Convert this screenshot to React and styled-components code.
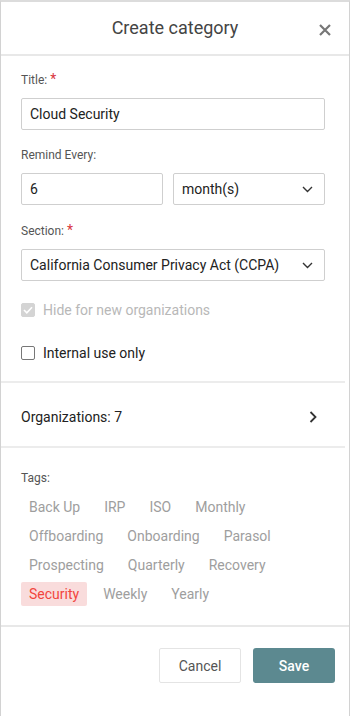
import styled, { createGlobalStyle } from 'styled-components';

const tags = [
  'Back Up', 'IRP', 'ISO', 'Monthly',
  'Offboarding', 'Onboarding', 'Parasol',
  'Prospecting', 'Quarterly', 'Recovery',
  'Security', 'Weekly', 'Yearly',
];

const GlobalStyle = createGlobalStyle`
  html, body {
    margin: 0;
    padding: 0;
    background: #fff;
    font-family: Roboto, "Liberation Sans", Arial, sans-serif;
  }
  * { box-sizing: border-box; }
`;

const Chevron = () => (
  <svg width='11' height='7' viewBox='0 0 11 7' fill='none'>
    <path d='M1 1l4.5 4.5L10 1' stroke='#333' strokeWidth='1.4' />
  </svg>
);

const App = () => {
  return (
    <>
      <GlobalStyle />
      <Modal>
        <Header>
          <h1>Create category</h1>
          <CloseButton aria-label='Close'>
            <svg width='12' height='12' viewBox='0 0 12 12'>
              <path d='M1 1l10 10M11 1L1 11' stroke='#777' strokeWidth='2.2' />
            </svg>
          </CloseButton>
        </Header>

        <Body>
          <FormSection>
            <Label>Title: <Req>*</Req></Label>
            <Input readOnly value='Cloud Security' />

            <Label>Remind Every:</Label>
            <Row>
              <Input readOnly value='6' />
              <Select>
                <span>month(s)</span>
                <Chevron />
              </Select>
            </Row>

            <Label>Section: <Req>*</Req></Label>
            <Select>
              <span>California Consumer Privacy Act (CCPA)</span>
              <Chevron />
            </Select>

            <CheckRow disabled>
              <Box checked disabled>
                <svg width='10' height='8' viewBox='0 0 10 8' fill='none'>
                  <path d='M1 4l2.8 2.8L9 1.2' stroke='#fff' strokeWidth='1.6' />
                </svg>
              </Box>
              Hide for new organizations
            </CheckRow>
            <CheckRow>
              <Box />
              Internal use only
            </CheckRow>
          </FormSection>

          <OrgRow>
            <span>Organizations: 7</span>
            <svg width='8' height='12' viewBox='0 0 8 12' fill='none'>
              <path d='M1.5 1l5 5-5 5' stroke='#333' strokeWidth='1.8' />
            </svg>
          </OrgRow>

          <TagSection>
            <TagLabel>Tags:</TagLabel>
            <TagList>
              {tags.map((t) => (
                <Tag key={t} active={t === 'Security'}>{t}</Tag>
              ))}
            </TagList>
          </TagSection>
        </Body>

        <Footer>
          <CancelButton>Cancel</CancelButton>
          <SaveButton>Save</SaveButton>
        </Footer>
      </Modal>
    </>
  );
};

const Modal = styled.div`
  width: 350px;
  height: 716px;
  border: 1px solid #d2d2d2;
  border-top: 2px solid #dcdcdc;
  border-bottom: none;
  display: flex;
  flex-direction: column;
  background: #fff;
`;

const Header = styled.header`
  position: relative;
  height: 54px;
  border-bottom: 2px solid #e8e8e8;
  display: flex;
  align-items: center;
  justify-content: center;

  h1{
    margin: 0 0 2px;
    font-size: 18px;
    font-weight: 400;
    color: #444;
  }
`;

const CloseButton = styled.button`
  position: absolute;
  right: 14px;
  top: 18px;
  width: 20px;
  height: 20px;
  padding: 0;
  border: none;
  background: none;
  display: flex;
  align-items: center;
  justify-content: center;
`;

const Body = styled.div`
  margin-right: 4px;
  flex: 0 0 auto;
`;

const FormSection = styled.div`
  padding: 15px 20px 18px;
  border-bottom: 2px solid #ececec;
`;

const Label = styled.div`
  font-size: 12px;
  line-height: 16px;
  color: #555;
  margin: 17px 0 10px;

  &:first-child{
    margin-top: 0;
  }
`;

const Req = styled.span`
  color: #d9363e;
  font-size: 14px;
`;

const Input = styled.input`
  display: block;
  width: 100%;
  height: 32px;
  border: 1px solid #cfcfcf;
  border-radius: 2px;
  padding: 0 8px;
  font-family: inherit;
  font-size: 14px;
  color: #222;
  outline: none;
`;

const Row = styled.div`
  display: grid;
  grid-template-columns: 142px 1fr;
  gap: 10px;
`;

const Select = styled.div`
  height: 32px;
  border: 1px solid #cfcfcf;
  border-radius: 2px;
  padding: 0 11px 0 8px;
  display: flex;
  align-items: center;
  justify-content: space-between;
  font-size: 14px;
  color: #222;
`;

const CheckRow = styled.label`
  display: flex;
  align-items: center;
  gap: 8px;
  height: 20px;
  font-size: 14px;
  color: ${(p) => (p.disabled ? '#b8b8b8' : '#222')};
  margin-top: 19px;

  & + &{
    margin-top: 23px;
  }
`;

const Box = styled.span`
  width: 14px;
  height: 14px;
  border-radius: 2px;
  border: 1px solid ${(p) => (p.disabled ? '#d4d4d4' : '#777')};
  background: ${(p) => (p.checked ? '#d4d4d4' : '#fff')};
  display: flex;
  align-items: center;
  justify-content: center;
`;

const OrgRow = styled.div`
  height: 65px;
  padding: 4px 28px 0 20px;
  display: flex;
  align-items: center;
  justify-content: space-between;
  font-size: 14px;
  color: #222;
  border-bottom: 2px solid #ececec;
`;

const TagSection = styled.div`
  padding: 22px 20px 19px;
`;

const TagLabel = styled.div`
  font-size: 12px;
  line-height: 16px;
  color: #555;
  margin-bottom: 9px;
`;

const TagList = styled.div`
  display: flex;
  flex-wrap: wrap;
  gap: 5px 8px;
`;

const Tag = styled.span`
  height: 24px;
  padding: 0 8px;
  display: flex;
  align-items: center;
  font-size: 14px;
  border-radius: 2px;
  color: ${(p) => (p.active ? '#f2453d' : '#9e9e9e')};
  background: ${(p) => (p.active ? '#f9dcdc' : 'transparent')};
`;

const Footer = styled.footer`
  border-top: 2px solid #e8e8e8;
  padding: 21px 14px 0;
  display: flex;
  justify-content: flex-end;
  gap: 12px;
`;

const CancelButton = styled.button`
  width: 82px;
  height: 35px;
  border: 1px solid #e4e4e4;
  border-radius: 2px;
  background: #fff;
  font-family: inherit;
  font-size: 14px;
  color: #555;
`;

const SaveButton = styled.button`
  width: 82px;
  height: 35px;
  border: none;
  border-radius: 3px;
  background: #5c8990;
  font-family: inherit;
  font-size: 14px;
  font-weight: 500;
  color: #fff;
`;

export default App;
